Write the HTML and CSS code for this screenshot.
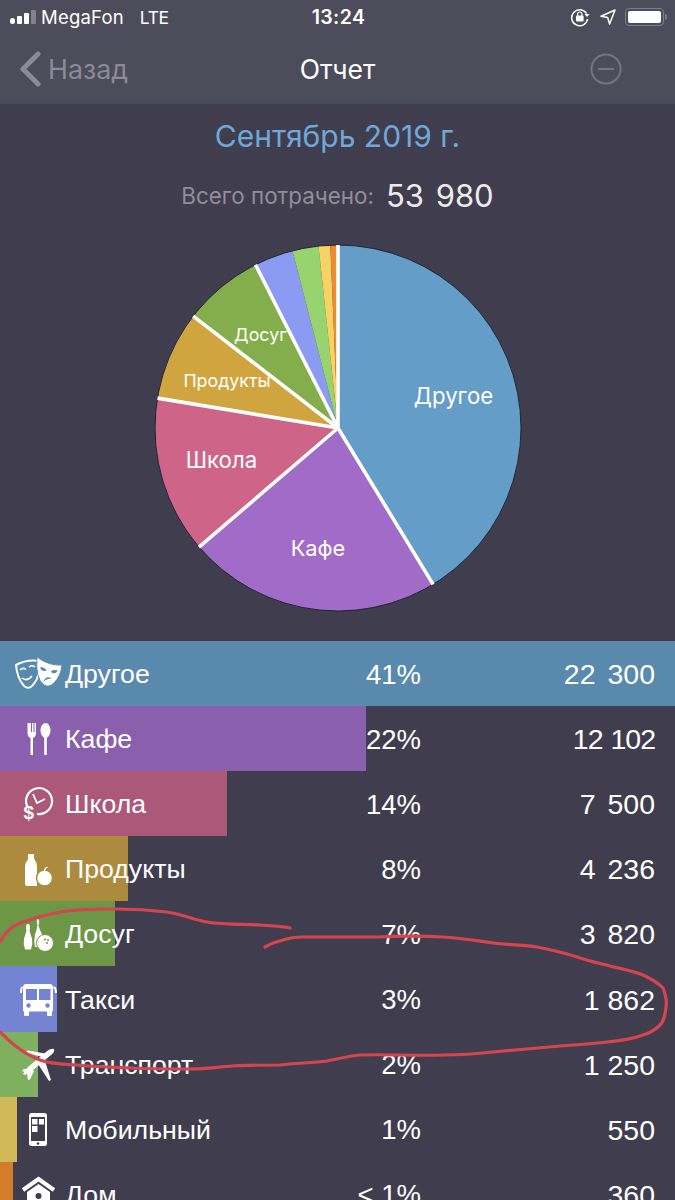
FILE: index.html
```html
<!DOCTYPE html>
<html lang="ru">
<head>
<meta charset="utf-8">
<title>Отчет</title>
<link rel="stylesheet" href="styles.css">
</head>
<body>
<div class="page">
  <header class="top">
    <div class="status">
      <div class="status-left">
        <span class="signal"><i class="on s1"></i><i class="on s2"></i><i class="on s3"></i><i class="s4"></i></span>
        <span class="carrier">MegaFon</span>
        <span class="net">LTE</span>
      </div>
      <div class="clock">13:24</div>
      <div class="status-right">
        <svg class="ic-lock" viewBox="0 0 20 20" width="20" height="20"><path d="M16.5 6.5A8 8 0 1 0 17.6 12" fill="none" stroke="#fff" stroke-width="1.5"/><path d="M14.5 7h5l-2.5 3z" fill="#fff"/><rect x="6" y="8.5" width="7.6" height="6" rx="1" fill="#fff"/><path d="M7.6 9V7.2a2.2 2.2 0 0 1 4.4 0V9" fill="none" stroke="#fff" stroke-width="1.2"/></svg>
        <svg class="ic-loc" viewBox="0 0 16 16" width="16" height="16"><path d="M15 1 1 7.2l6.6 1.2L9.6 15z" fill="none" stroke="#fff" stroke-width="1.5" stroke-linejoin="round"/></svg>
        <span class="battery"><span class="battery-fill"></span></span>
        <span class="battery-cap"></span>
      </div>
    </div>
    <nav class="nav">
      <div class="back">
        <svg viewBox="0 0 22 36" width="22" height="36"><path d="M19 3 4 18l15 15" fill="none" stroke="#8b8a96" stroke-width="5" stroke-linecap="round" stroke-linejoin="round"/></svg>
        <span>Назад</span>
      </div>
      <div class="nav-title">Отчет</div>
      <svg class="minus" viewBox="0 0 32 32" width="32" height="32"><circle cx="16" cy="16" r="14.6" fill="none" stroke="#75747f" stroke-width="2"/><path d="M8 16h16" stroke="#75747f" stroke-width="2"/></svg>
    </nav>
  </header>

  <main>
    <h1 class="month">Сентябрь 2019 г.</h1>
    <div class="total"><span class="total-label">Всего потрачено:</span><span class="total-value">53 980</span></div>

    <svg class="pie" viewBox="153 243 370 370" width="370" height="370">
      <path fill="#649dc7" d="M338 428V245A183 183 0 0 1 433.1 584.4Z"/>
      <path fill="#a06cc8" d="M338 428L433.1 584.4A183 183 0 0 1 199 547.1Z"/>
      <path fill="#cf6489" d="M338 428L199 547.1A183 183 0 0 1 157.5 398.1Z"/>
      <path fill="#d0a540" d="M338 428L157.5 398.1A183 183 0 0 1 193.2 316.1Z"/>
      <path fill="#84ae4b" d="M338 428L193.2 316.1A183 183 0 0 1 255.5 264.7Z"/>
      <path fill="#8b9bf2" d="M338 428L255.5 264.7A183 183 0 0 1 292.5 250.7Z"/>
      <path fill="#97d36f" d="M338 428L292.5 250.7A183 183 0 0 1 318.5 246Z"/>
      <path fill="#f7d264" d="M338 428L318.5 246A183 183 0 0 1 330.3 245.2Z"/>
      <path fill="#ea8d33" d="M338 428L330.3 245.2A183 183 0 0 1 338 245Z"/>
      <circle cx="338" cy="428" r="183" fill="none" stroke="#1f2433" stroke-width="1"/>
      <g stroke="#fff" stroke-width="3.6" fill="none">
        <path d="M338 428V245M338 428L433.1 584.4M338 428L199 547.1M338 428L157.5 398.1M338 428L193.2 316.1M338 428L255.5 264.7"/>
      </g>
      <g class="pie-labels">
        <text x="453.5" y="404" class="lb-l">Другое</text>
        <text x="318" y="555.5" class="lb-m">Кафе</text>
        <text x="221.500" y="468" class="lb-l">Школа</text>
        <text x="227" y="387" class="lb-s">Продукты</text>
        <text x="260.500" y="341" class="lb-s">Досуг</text>
      </g>
    </svg>

    <ul class="rows">
      <li class="row c-other" style="background-size:675px 100%">
        <svg class="icon" viewBox="0 0 50 44"><path d="M3 13Q14 7 26 9Q28 24 20 33Q16 38 11 34Q4 26 3 13Z" fill="none" stroke="#fff" stroke-width="2"/><path d="M7 18q3-3 6-.5M16 15q3-2.500 6 0M9 26q5 4 10-2" fill="none" stroke="#fff" stroke-width="1.500"/><path d="M24 5Q36 14 49 13Q48 24 41 31Q36 36 31 33Q22 26 24 5Z" fill="#fff" stroke="#5a89ae" stroke-width="1"/><path d="M27.500 15q4 0 6 3.500q-4 1.500-6-1.500zM38 19q3-1.500 7-.5q-2 3.500-6 2.500zM30 30q3-7 9-3.500q-5-.5-9 3.500z" fill="#5a89ae"/></svg>
        <span class="name">Другое</span><span class="pct">41%</span><span class="amt">22 300</span>
      </li>
      <li class="row c-cafe" style="background-size:366px 100%">
        <svg class="icon" viewBox="0 0 50 44"><path d="M14.500 6v10q0 4 3 5v17h2.500V21q3-1 3-5V6h-1.500v9h-1V6h-1.500v9h-1V6z" fill="#fff"/><ellipse cx="32.500" cy="13.500" rx="5" ry="7.500" fill="#fff"/><rect x="31.200" y="19" width="2.600" height="19" fill="#fff"/></svg>
        <span class="name">Кафе</span><span class="pct">22%</span><span class="amt tighter">12 102</span>
      </li>
      <li class="row c-school" style="background-size:227px 100%">
        <svg class="icon" viewBox="0 0 50 44"><path d="M14.500 25A13 13 0 1 1 24 31.900" fill="none" stroke="#fff" stroke-width="2.200"/><path d="M20 12l4 9 8-4" fill="none" stroke="#fff" stroke-width="1.800"/><text x="10.500" y="37" class="dollar">$</text></svg>
        <span class="name">Школа</span><span class="pct">14%</span><span class="amt">7 500</span>
      </li>
      <li class="row c-food" style="background-size:128px 100%">
        <svg class="icon" viewBox="0 0 50 44"><path d="M15 7h6v3.500l.5 2q2.500 3 2.500 7V39H14q-2 0-2-2V19.500q0-4 3-7z" fill="#fff"/><circle cx="31.500" cy="31" r="8" fill="#fff" stroke="#ad8b3e" stroke-width="1.500"/><path d="M31.500 24q0-3 3-4" fill="none" stroke="#fff" stroke-width="1.300"/></svg>
        <span class="name">Продукты</span><span class="pct">8%</span><span class="amt">4 236</span>
      </li>
      <li class="row c-leisure" style="background-size:115px 100%">
        <svg class="icon" viewBox="0 0 50 44"><path d="M15 12q2 0 2 3q0 2-.5 3.500q1 4 2.500 8q1 6-1 11h-6q-2-5-1-11q1.500-4 2.500-8q-.5-1.500-.5-3.500q0-3 2-3z" fill="#fff"/><path d="M24 6q2.500 0 2.500 3.500q0 2-.5 4q1.500 5 3.500 9q1.500 4 0 8q-1 2-1 5h-7q-1.500-7 0-13q1.500-4 2.500-9q-.5-2-.5-4q0-3.500 2-3.500z" fill="#fff" stroke="#6d9647" stroke-width="1"/><circle cx="32" cy="31" r="8.500" fill="#fff" stroke="#6d9647" stroke-width="1"/><circle cx="32" cy="27.500" r="1" fill="#6d9647"/><circle cx="35" cy="28" r="1" fill="#6d9647"/><circle cx="34" cy="31" r="1" fill="#6d9647"/></svg>
        <span class="name">Досуг</span><span class="pct">7%</span><span class="amt">3 820</span>
      </li>
      <li class="row c-taxi" style="background-size:57px 100%">
        <svg class="icon" viewBox="0 0 50 44"><path d="M13 7h24q3 0 3 4v22q0 1.500-1 1.500V38q0 1-1 1h-3q-1 0-1-1v-3.500H16V38q0 1-1 1h-3q-1 0-1-1v-3.500q-1 0-1-1.500V11q0-4 3-4z" fill="#fff"/><rect x="13" y="12" width="11" height="11" fill="#7483d2"/><rect x="26" y="12" width="11.500" height="11" fill="#7483d2"/><circle cx="15.500" cy="28.500" r="2.200" fill="#7483d2"/><circle cx="34.500" cy="28.500" r="2.200" fill="#7483d2"/><path d="M9.500 10q-1.500 1-1.500 6M40.500 10q2.500 1 2.500 6" fill="none" stroke="#fff" stroke-width="2"/></svg>
        <span class="name">Такси</span><span class="pct">3%</span><span class="amt tight">1 862</span>
      </li>
      <li class="row c-trans" style="background-size:38px 100%">
        <svg class="icon" viewBox="0 0 50 44"><path d="M41 7Q42 10 38 13L20 28 12 33 10 32 15 25 33 10Q38 6 41 7Z" fill="#fff"/><path d="M29 15 12 10 15 8.500 35 12Z" fill="#fff"/><path d="M25 22 36 39 38 38 31 16Z" fill="#fff"/><path d="M16 26 10 27.500 9 29 14 31 15 38 17 37.500 21 29Z" fill="#fff"/></svg>
        <span class="name">Транспорт</span><span class="pct">2%</span><span class="amt tight">1 250</span>
      </li>
      <li class="row c-mobile" style="background-size:17px 100%">
        <svg class="icon" viewBox="0 0 50 44"><rect x="16" y="6" width="18" height="33" rx="2.500" fill="#fff"/><rect x="18" y="10" width="14" height="24" fill="#403d4f"/><rect x="19" y="12" width="5.500" height="5.500" fill="#fff"/><rect x="26" y="12" width="5" height="5.500" fill="#fff"/><rect x="19" y="19" width="5.500" height="6" fill="#fff"/><circle cx="25" cy="36.500" r="1.300" fill="#403d4f"/></svg>
        <span class="name">Мобильный</span><span class="pct">1%</span><span class="amt">550</span>
      </li>
      <li class="row c-home" style="background-size:13px 100%">
        <svg class="icon" viewBox="0 0 50 44"><path d="M10 18 25.500 7 41 18" fill="none" stroke="#fff" stroke-width="4"/><path d="M14 20 25.500 12 37 20v18H14z" fill="#fff"/><circle cx="25.500" cy="24" r="3" fill="#403d4f"/></svg>
        <span class="name">Дом</span><span class="pct">&lt; 1%</span><span class="amt">360</span>
      </li>
    </ul>
  </main>

  <svg class="scribble" viewBox="0 0 675 1200" width="675" height="1200">
    <path d="M0 942C5 932 12 926 20 923C40 916 60 911 77 910C95 909 105 909 117 909C135 909 150 910 167 912C185 915 195 920 207 922C225 925 245 924 260 925C270 926 282 926 290 928"/>
    <path d="M265 947C272 943 275 942 280 941C288 938 295 937 303 937C325 937 350 937 377 937C400 936 425 936 443 937C460 938 478 941 493 943C510 945 525 945 537 947C552 950 565 953 577 957C588 961 598 963 610 966C622 969 633 971 643 975C652 979 658 983 663 988C666 996 667 1002 666 1007C665 1016 664 1021 660 1025C655 1030 650 1033 643 1035C632 1039 620 1041 607 1042C590 1044 575 1045 560 1046C538 1048 515 1050 493 1052C475 1054 460 1055 443 1055C415 1056 385 1054 360 1055C348 1056 338 1059 327 1061C312 1063 296 1063 280 1065C265 1065 250 1065 233 1066C218 1067 205 1069 190 1069C170 1069 150 1069 133 1068C112 1067 95 1067 77 1065C62 1064 50 1064 40 1060C30 1056 23 1052 17 1047C10 1042 5 1037 0 1032"/>
  </svg>
</div>
</body>
</html>
```

FILE: styles.css
```css
* { box-sizing: border-box; }
html, body { margin: 0; padding: 0; }
body { background: #403d4f; }
.page {
  position: relative;
  width: 675px;
  height: 1200px;
  overflow: hidden;
  background: #403d4f;
  color: #fff;
  font-family: "Inter", "Liberation Sans", sans-serif;
}

/* top bars */
.top { height: 104px; background: #4d4c5b; border-bottom: 1px solid #474653; }
.status {
  height: 36px;
  padding: 0 8px 2px 10px;
  display: grid;
  grid-template-columns: 1fr auto 1fr;
  align-items: center;
}
.status-left { display: flex; align-items: center; font-size: 18.500px; }
.signal { display: flex; align-items: flex-end; gap: 2px; width: 31px; height: 14px; }
.signal i { display: block; width: 5px; background: #83828c; border-radius: 1px; }
.signal .on { background: #fff; }
.signal .s1 { height: 6px; border-radius: 3px; }
.signal .s2 { height: 8px; }
.signal .s3 { height: 11px; }
.signal .s4 { height: 14px; }
.carrier { letter-spacing: .2px; }
.net { margin-left: 16px; font-size: 17.500px; letter-spacing: -.4px; }
.clock { font-size: 19.500px; font-weight: 600; letter-spacing: .4px; }
.status-right { display: flex; align-items: center; justify-content: flex-end; }
.ic-lock { margin-right: 10px; }
.ic-loc { margin-right: 9px; }
.battery { width: 39px; height: 18px; border: 1.500px solid #7d7c87; border-radius: 4px; padding: 2px; display: block; }
.battery-fill { display: block; width: 100%; height: 100%; background: #fff; border-radius: 2px; }
.battery-cap { width: 2px; height: 6px; margin-left: 1px; background: #7d7c87; border-radius: 0 2px 2px 0; }

.nav {
  height: 65px;
  padding: 0 19px;
  display: grid;
  grid-template-columns: 1fr auto 1fr;
  align-items: center;
}
.back { display: flex; align-items: center; gap: 7px; font-size: 26.800px; color: #8b8a96; }
.nav-title { font-size: 26.500px; color: #fff; }
.minus { justify-self: end; margin-right: 34px; }

/* summary */
main { display: block; }
.month {
  margin: 14px 0 0;
  height: 36px;
  line-height: 36px;
  text-align: center;
  font-size: 30px;
  font-weight: 400;
  color: #6ea9d9;
}
.total {
  margin-top: 19px;
  height: 44px;
  display: flex;
  justify-content: center;
  align-items: center;
  gap: 12px;
}
.total-label { font-size: 22.400px; color: #8f8e99; }
.total-value { font-size: 31px; color: #ececee; word-spacing: 3px; }

.pie { display: block; margin: 26px 0 0 153px; }
.pie-labels text { fill: #fff; text-anchor: middle; }
.lb-l { font-size: 22.200px; }
.lb-m { font-size: 21.800px; }
.lb-s { font-size: 17.800px; }

/* rows */
.rows { list-style: none; margin: 28px 0 0; padding: 0; }
.row {
  padding: 2px 20px 0 13px;
  height: 65.100px;
  display: grid;
  grid-template-columns: 52px 1fr 70px 234px;
  align-items: center;
  font-family: "Liberation Sans", Arial, sans-serif;
  font-size: 26.700px;
  background-repeat: no-repeat;
}
.icon { display: block; width: 50px; height: 44px; margin-top: -2px; }
.pct, .amt { text-align: right; white-space: nowrap; }
.pct { font-size: 27.500px; }
.amt { font-size: 28.500px; word-spacing: 4px; }
.amt.tight { word-spacing: 0; }
.amt.tighter { word-spacing: 1px; letter-spacing: -1px; }
.dollar { font-family: "Liberation Sans", Arial, sans-serif; font-size: 19px; font-weight: 700; fill: #fff; }

.c-other { background-image: linear-gradient(#5a89ae, #5a89ae); }
.c-cafe { background-image: linear-gradient(#8a5fad, #8a5fad); }
.c-school { background-image: linear-gradient(#ac5878, #ac5878); }
.c-food { background-image: linear-gradient(#ad8b3e, #ad8b3e); }
.c-leisure { background-image: linear-gradient(#6d9647, #6d9647); }
.c-taxi { background-image: linear-gradient(#7483d2, #7483d2); }
.c-trans { background-image: linear-gradient(#7eb05f, #7eb05f); }
.c-mobile { background-image: linear-gradient(#d1b858, #d1b858); }
.c-home { background-image: linear-gradient(#d37d2b, #d37d2b); }

/* hand-drawn mark over the list */
.scribble { position: absolute; left: 0; top: 0; pointer-events: none; }
.scribble path { fill: none; stroke: #d5454e; stroke-width: 3.200; stroke-linecap: round; stroke-linejoin: round; }
```
